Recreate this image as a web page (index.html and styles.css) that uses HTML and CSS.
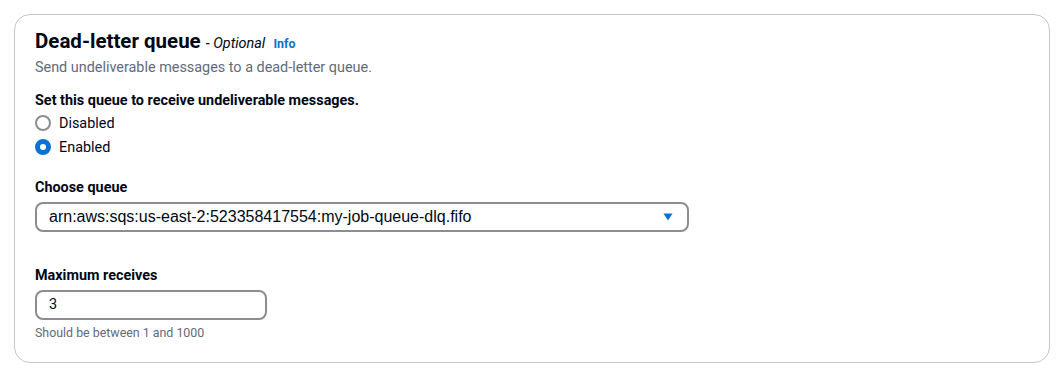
FILE: index.html
```html
<!DOCTYPE html>
<html lang="en">
<head>
  <meta charset="UTF-8" />
  <title>Dead-letter queue</title>
  <link rel="stylesheet" href="styles.css">
</head>
<body>
  <!-- Dead-letter queue settings panel -->
  <div class="card">
    <h2 class="title">Dead-letter queue <span class="optional">- Optional</span> <a class="info" href="#">Info</a></h2>
    <p class="desc">Send undeliverable messages to a dead-letter queue.</p>

    <p class="label label-set">Set this queue to receive undeliverable messages.</p>
    <div class="radios">
      <label class="radio"><span class="dot"></span>Disabled</label>
      <label class="radio"><span class="dot checked"></span>Enabled</label>
    </div>

    <p class="label label-queue">Choose queue</p>
    <div class="select">
      <span class="select-value">arn:aws:sqs:us-east-2:523358417554:my-job-queue-dlq.fifo</span>
      <svg class="caret" width="10" height="8" viewBox="0 0 10 8"><path d="M0.5 0.5 H9.5 L5 7.5 Z" fill="#0972d3"/></svg>
    </div>

    <p class="label label-max">Maximum receives</p>
    <div class="input">3</div>
    <p class="hint">Should be between 1 and 1000</p>
  </div>
</body>
</html>
```

FILE: styles.css
```css
* { box-sizing: border-box; margin: 0; padding: 0; }
body { padding: 14px 15px 0 14px; font-family: Roboto, "Noto Sans", sans-serif; color: #000716; background: #fff; }
.card { border: 1px solid #c6c6cd; border-radius: 16px; padding: 14px 20px 21px; width: 1036px; }
.title { font-size: 20.5px; line-height: 24px; font-weight: 700; }
.optional { font-size: 14.4px; font-weight: 400; font-style: italic; }
.info { font-size: 12.4px; font-weight: 700; color: #0972d3; text-decoration: none; margin-left: 3px; }
.desc { font-size: 14.4px; line-height: 20px; color: #5f6b7a; margin-top: 2px; }
.label { font-size: 14.4px; line-height: 20px; font-weight: 700; }
.label-set { margin-top: 13px; }
.label-queue { margin-top: 19px; }
.label-max { margin-top: 34px; }
.radios { display: flex; flex-direction: column; }
.radio { display: flex; align-items: center; gap: 8px; height: 24px; font-size: 14.4px; }
.dot { width: 16px; height: 16px; border-radius: 50%; border: 2px solid #8c8c94; }
.dot.checked { border: 5px solid #0972d3; background: #fff; }
.select { display: flex; align-items: center; justify-content: space-between; width: 654px; height: 30px; margin-top: 4px; padding: 0 14px 0 12px; border: 2px solid #8c8c94; border-radius: 8px; }
.select-value { font-family: "Liberation Sans", Arial, sans-serif; font-size: 16px; }
.input { width: 232px; height: 30px; margin-top: 4px; padding: 0 12px; border: 2px solid #8c8c94; border-radius: 8px; font-size: 14.4px; line-height: 26px; }
.hint { font-size: 12.4px; line-height: 16px; color: #5f6b7a; margin-top: 5px; }
```
